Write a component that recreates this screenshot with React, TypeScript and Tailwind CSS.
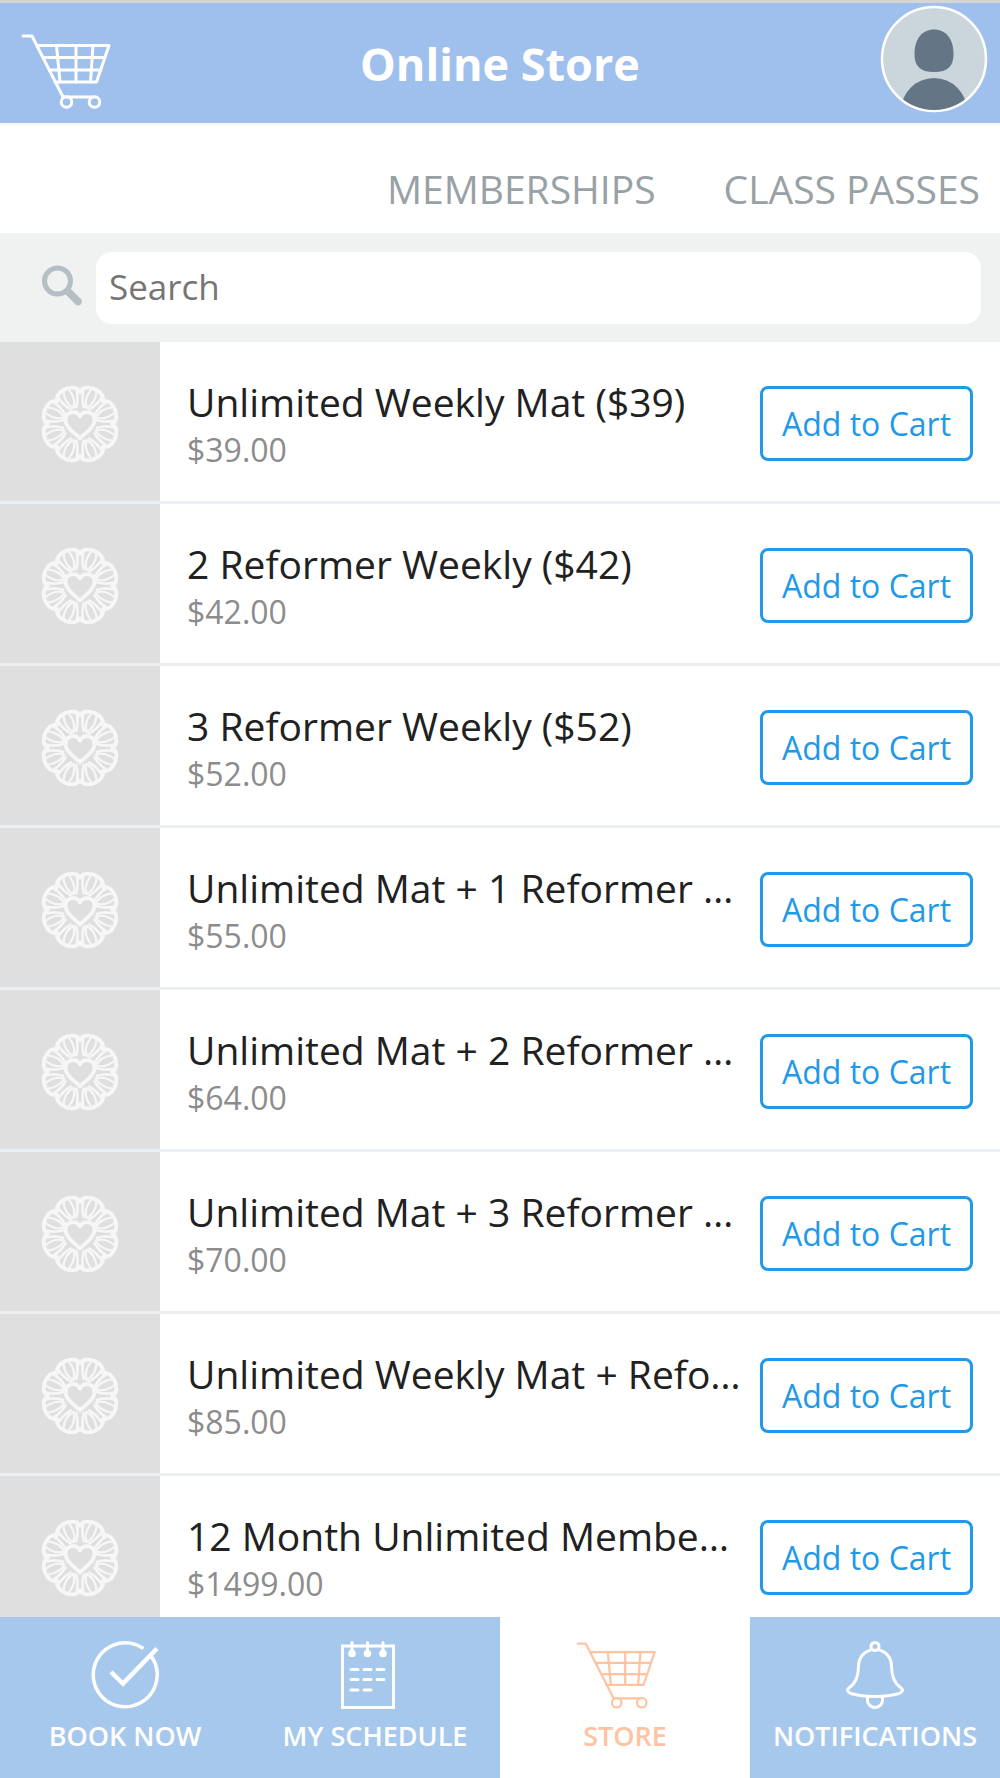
import React, { useState } from 'react';

interface Product {
  name: string;
  price: string;
}

const products: Product[] = [
  { name: 'Unlimited Weekly Mat ($39)', price: '$39.00' },
  { name: '2 Reformer Weekly ($42)', price: '$42.00' },
  { name: '3 Reformer Weekly ($52)', price: '$52.00' },
  { name: 'Unlimited Mat + 1 Reformer Weekly', price: '$55.00' },
  { name: 'Unlimited Mat + 2 Reformer Weekly', price: '$64.00' },
  { name: 'Unlimited Mat + 3 Reformer Weekly', price: '$70.00' },
  { name: 'Unlimited Weekly Mat + Reformer', price: '$85.00' },
  { name: '12 Month Unlimited Membership', price: '$1499.00' },
];

const CartIcon = ({ className, strokeWidth = 2.5 }: { className?: string; strokeWidth?: number }) => (
  <svg viewBox="0 0 90 76" preserveAspectRatio="xMinYMid meet" className={className} fill="none" stroke="currentColor" strokeWidth={strokeWidth} strokeLinecap="round" strokeLinejoin="round" aria-hidden="true">
    <path d="M2 3H11L42 64H72" />
    <path d="M16 12.500H88L75.500 49H34" />
    <path d="M22 24.500H83.500M28.500 37H79.500" />
    <path d="M35.500 12.500L39 49M55 12.500V49M72 12.500L69.500 49" />
    <circle cx="45.500" cy="69" r="5.300" />
    <circle cx="73.500" cy="69" r="5.300" />
  </svg>
);

const CheckIcon = () => (
  <svg viewBox="0 0 68 68" className="h-[68px] w-[68px]" fill="none" stroke="currentColor" strokeWidth="3.500" aria-hidden="true">
    <path d="M52.500 7.500A32 32 0 1 0 60.500 15.500" />
    <path d="M20 31L32 42.500L66 7.500" strokeWidth="4.500" />
  </svg>
);

const ScheduleIcon = () => (
  <svg viewBox="0 0 68 68" className="h-[68px] w-[68px]" fill="none" stroke="currentColor" strokeWidth="3" strokeLinecap="round" aria-hidden="true">
    <rect x="1.500" y="5" width="51" height="61.500" />
    <path d="M11 1.500V10M26.500 1.500V10M42 1.500V10" />
    <g fill="currentColor" stroke="none">
      <circle cx="11" cy="12.500" r="3.800" />
      <circle cx="26.500" cy="12.500" r="3.800" />
      <circle cx="42" cy="12.500" r="3.800" />
    </g>
    <path d="M10 28.500H17M23 28.500H30M36 28.500H43M10 38.500H17M23 38.500H30M36 38.500H43M10 49H17M23 49H30" />
  </svg>
);

const BellIcon = () => (
  <svg viewBox="0 0 58 68" className="h-[68px] w-[58px]" fill="none" stroke="currentColor" strokeWidth="3" aria-hidden="true">
    <circle cx="29" cy="5.500" r="4" />
    <path d="M25 9C17 11 12.500 17.500 12.500 25C12.500 35 10 42 3.500 46.500C0.500 48.500 1 51 5 52.500C18 56.500 40 56.500 53 52.500C57 51 57.500 48.500 54.500 46.500C48 42 45.500 35 45.500 25C45.500 17.500 41 11 33 9" />
    <path d="M22 55.500C20 62 24 66.500 29 66.500S38 62 36 55.500" />
  </svg>
);

const spokes = [22.5, 67.5, 112.5, 157.5, 202.5, 247.5, 292.5, 337.5];

const FlowerLogo = () => (
  <svg viewBox="-40 -40 80 80" className="h-20 w-20 text-[#f7f7f7]" fill="none" stroke="currentColor" strokeWidth="3" strokeLinecap="round" strokeLinejoin="round" aria-hidden="true">
    {spokes.map((angle) => (
      <g key={angle} transform={`rotate(${angle})`}>
        <path d="M-12.300 -30C-11 -40.500 11 -40.500 12.300 -30" strokeWidth="3.800" />
        <path d="M-10 -33C-9 -27 -6 -21 -3 -17M10 -33C9 -27 6 -21 3 -17" strokeWidth="2.600" />
        <path d="M-3 -36C-5 -29 -4 -22 0 -17C4 -22 5 -29 3 -36" strokeWidth="2.200" />
      </g>
    ))}
    <path d="M0 14.500C-5 9 -14.500 4 -14.500 -4C-14.500 -12.500 -4 -14.500 0 -7.500C4 -14.500 14.500 -12.500 14.500 -4C14.500 4 5 9 0 14.500Z" fill="#dfdfdf" strokeWidth="3.800" />
  </svg>
);

const SearchIcon = () => (
  <svg viewBox="0 0 42 42" className="h-[42px] w-[42px] overflow-visible text-[#b4bfc5]" fill="none" stroke="currentColor" aria-hidden="true">
    <circle cx="16.500" cy="14" r="13" strokeWidth="5" />
    <path d="M27 24.500L37 34.500" strokeWidth="7.500" strokeLinecap="round" />
  </svg>
);

const Avatar = () => (
  <svg viewBox="0 0 108 108" className="h-[108px] w-[108px]" aria-hidden="true">
    <defs>
      <clipPath id="avatar-clip">
        <circle cx="54" cy="54" r="51" />
      </clipPath>
    </defs>
    <circle cx="54" cy="54" r="52" fill="#cbd6dc" stroke="#fff" strokeWidth="2.500" />
    <path d="M54 24.500C66 24.500 73.500 34 73.500 49C73.500 61 68 67 54 67S34.500 61 34.500 49C34.500 34 42 24.500 54 24.500Z" fill="#647585" />
    <circle cx="54" cy="106" r="33" fill="#647585" clipPath="url(#avatar-clip)" />
  </svg>
);

const ProductRow: React.FC<{ product: Product }> = ({ product }) => (
  <li className="flex h-[162px] shrink-0 border-b-[3px] border-[#ebeff1]">
    <div className="flex w-40 shrink-0 items-center justify-center bg-[#dfdfdf] pt-1">
      <FlowerLogo />
    </div>
    <div className="flex min-w-0 flex-1 items-center px-[27px] pt-1">
      <div className="min-w-0 flex-1 pr-[17px]">
        <h2 className="truncate text-[39px] leading-[52px] text-[#212121]">{product.name}</h2>
        <p className="text-[32px] leading-[44px] text-[#8c8c8c]">{product.price}</p>
      </div>
      <button className="h-[75px] w-[213px] shrink-0 rounded-lg border-[3px] border-[#2199e8] text-[32px] text-[#2199e8]">
        Add to Cart
      </button>
    </div>
  </li>
);

const navItems = [
  { label: 'BOOK NOW', icon: <CheckIcon /> },
  { label: 'MY SCHEDULE', icon: <ScheduleIcon /> },
  { label: 'STORE', icon: <CartIcon className="h-[68px] w-[98px]" /> },
  { label: 'NOTIFICATIONS', icon: <BellIcon /> },
];

const App: React.FC = () => {
  const [query, setQuery] = useState('');
  const visible = products.filter((p) => p.name.toLowerCase().includes(query.toLowerCase()));

  return (
    <div className="flex h-screen flex-col bg-white font-['Open_Sans',sans-serif]">
      <header className="grid h-[123px] shrink-0 grid-cols-3 items-center border-t-[3px] border-[#d5d5d5] bg-[#9fc0ed] text-white">
        <button aria-label="Cart" className="ml-[21px] justify-self-start pt-4">
          <CartIcon className="h-[76px] w-[90px]" strokeWidth={3} />
        </button>
        <h1 className="pt-0.5 text-center text-[45px] font-bold whitespace-nowrap">Online Store</h1>
        <button aria-label="Profile" className="mr-3 mb-2 justify-self-end">
          <Avatar />
        </button>
      </header>

      <nav className="flex h-[110px] shrink-0 items-center justify-end gap-[68px] border-t-[3px] border-[#f5f6f6] pt-5 pr-5 text-[39px] text-[#98a1a5]">
        <a href="#memberships">MEMBERSHIPS</a>
        <a href="#class-passes">CLASS PASSES</a>
      </nav>

      <div className="flex h-[109px] shrink-0 items-center bg-[#eff2f1] pr-[19px] pl-[41px]">
        <label htmlFor="search" aria-label="Search">
          <SearchIcon />
        </label>
        <input
          id="search"
          type="text"
          placeholder="Search"
          value={query}
          onChange={(e) => setQuery(e.target.value)}
          className="ml-[13px] h-[72px] min-w-0 flex-1 rounded-2xl bg-white px-[13px] pb-0.5 text-[35px] text-[#212121] outline-none placeholder:text-[#757575]"
        />
      </div>

      <ul className="flex min-h-0 flex-1 flex-col overflow-hidden">
        {visible.map((product) => (
          <ProductRow key={product.name} product={product} />
        ))}
      </ul>

      <nav className="grid h-[161px] shrink-0 grid-cols-4 text-[27px] font-semibold">
        {navItems.map(({ label, icon }) => (
          <a
            key={label}
            href="#"
            className={`flex flex-col items-center gap-[7px] pt-6 ${label === 'STORE' ? 'bg-white text-[#ffc3a1]' : 'bg-[#a7c8ed] text-white'}`}
          >
            {icon}
            <span className="leading-10">{label}</span>
          </a>
        ))}
      </nav>
    </div>
  );
};

export default App;
